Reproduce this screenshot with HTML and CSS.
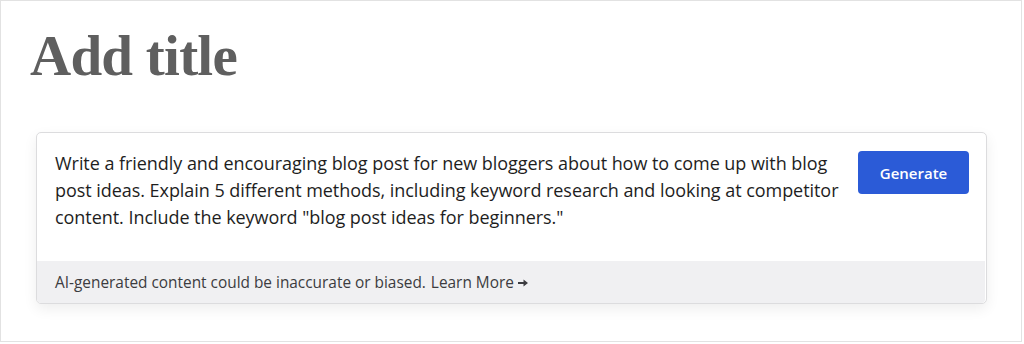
FILE: index.html
```html
<!DOCTYPE html>
<html>
<head>
<meta charset="utf-8">
<link rel="stylesheet" href="styles.css">
</head>
<body>
<div class="frame">
  <h1 class="title">Add title</h1>
  <div class="card">
    <div class="card-main">
      <p class="prompt">Write a friendly and encouraging blog post for new bloggers about how to come up with blog<br>post ideas. Explain 5 different methods, including keyword research and looking at competitor<br>content. Include the keyword "blog post ideas for beginners."</p>
      <button class="generate">Generate</button>
    </div>
    <div class="card-footer">AI-generated content could be inaccurate or biased. <span class="learn">Learn More <svg class="arrow" width="10" height="8" viewBox="0 0 10 8"><path d="M0 3.1h5.5V0.6L10 4 5.5 7.4V4.9H0z" fill="#3c3c40"/></svg></span></div>
  </div>
</div>
</body>
</html>
```
FILE: styles.css
```css
* { box-sizing: border-box; }
html, body { margin: 0; padding: 0; background: #fff; }
.frame {
  width: 1022px;
  height: 342px;
  border: 1px solid #e2e2e2;
  padding: 26px 0 0 35px;
}
.title {
  margin: 0 0 48px -6px;
  font-family: "Liberation Serif", "Times New Roman", serif;
  font-weight: bold;
  font-size: 57px;
  line-height: 1;
  letter-spacing: -0.75px;
  color: #5f5f5f;
}
.card {
  width: 951px;
  border: 1px solid #dcdcde;
  border-radius: 5px;
  background: #fff;
  box-shadow: 0 5px 14px rgba(0,0,0,0.07);
  font-family: "Open Sans", "Noto Sans", sans-serif;
}
.card-main {
  display: flex;
  align-items: flex-start;
  padding: 17px 17px 30px 18px;
  gap: 8px;
}
.prompt {
  margin: 0;
  flex: 1;
  font-size: 18px;
  line-height: 27px;
  color: #1e1e1e;
  white-space: nowrap;
  letter-spacing: -0.05px;
}
.generate {
  flex: none;
  margin-top: 1px;
  width: 111px;
  height: 43px;
  border: none;
  border-radius: 4px;
  background: #2b5bd7;
  color: #fff;
  font-family: "Open Sans", "Noto Sans", sans-serif;
  font-size: 15px;
  font-weight: 600;
}
.card-footer {
  margin: 0 1px 0 0;
  height: 42px;
  padding: 0 18px;
  display: flex;
  align-items: center;
  background: #f0f0f2;
  border-radius: 0 0 4px 4px;
  font-size: 15.4px;
  color: #3c3c40;
}
.learn { margin-left: 5px; display: inline-flex; align-items: center; gap: 4px; }
.arrow { display: block; margin-top: 1px; }
```
